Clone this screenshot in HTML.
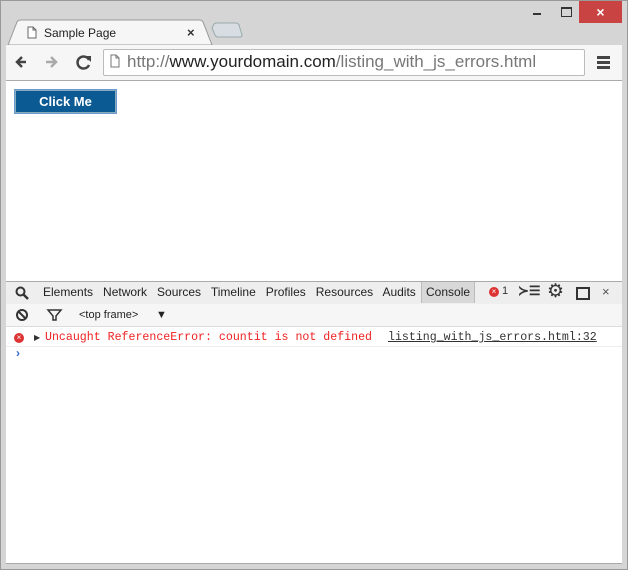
<!DOCTYPE html>
<html><head><style>
body{margin:0;width:628px;height:570px;background:#fff;font-family:"Liberation Sans",sans-serif;position:relative;overflow:hidden}
.a{position:absolute}
.mono{font-family:"Liberation Mono",monospace}
</style></head><body>
<div class="a" style="left:0;top:0;width:626px;height:568px;background:#d5d5d5;border:1px solid #999"></div>
<!-- window controls -->
<div class="a" style="left:533px;top:13px;width:8px;height:2px;background:#333"></div>
<div class="a" style="left:561px;top:7px;width:9px;height:7px;border:1.5px solid #333;border-top-width:2.5px"></div>
<div class="a" style="left:579px;top:1px;width:43px;height:22px;background:#c94343;color:#fff;font-size:14px;text-align:center;line-height:22px;font-weight:bold">×</div>
<!-- tab -->
<svg class="a" style="left:0;top:18px" width="250" height="28"><path d="M212 10 L214 6 Q215 5 217 5 L236 5 Q238 5 239 7 L242 17 Q242 19 240 19 L218 19 Q216 19 215 17 Z" fill="#d8dde3" stroke="#9aa"/><path d="M8 27 L17 4 Q18 2 21 2 L199 2 Q202 2 203 4 L212 27 Z" fill="#f6f6f6" stroke="#999"/></svg>
<svg class="a" style="left:27px;top:26px" width="10" height="13"><path d="M1 1H6L9 4V12H1Z M6 1V4H9" fill="#fff" stroke="#666"/></svg>
<div class="a" style="left:44px;top:26px;font-size:12px;color:#222">Sample Page</div>
<div class="a" style="left:187px;top:25px;font-size:13px;color:#333;font-weight:bold">×</div>
<!-- toolbar -->
<div class="a" style="left:6px;top:45px;width:616px;height:35px;background:#f6f6f6;border-bottom:1px solid #aaa"></div>
<svg class="a" style="left:14px;top:53px" width="80" height="18"><path d="M12 9H3M8 4L3 9L8 14" stroke="#444" stroke-width="2.5" fill="none"/><path d="M32 9H41M37 4L42 9L37 14" stroke="#aaa" stroke-width="2.5" fill="none"/><path d="M75 7A6 6 0 1 0 75 12" stroke="#444" stroke-width="2.5" fill="none"/><path d="M71 3H77V9Z" fill="#444"/></svg>
<div class="a" style="left:103px;top:49px;width:480px;height:25px;background:#fff;border:1px solid #bbb;border-radius:2px"></div>
<svg class="a" style="left:110px;top:54px" width="10" height="14"><path d="M1 1H6L9 4V13H1Z M6 1V4H9" fill="#fff" stroke="#777"/></svg>
<div class="a" style="left:127px;top:52px;font-size:17px;color:#777">http://<span style="color:#222">www.yourdomain.com</span>/listing_with_js_errors.html</div>
<div class="a" style="left:597px;top:56px;width:13px;height:2.5px;background:#444;box-shadow:0 5px 0 #444,0 10px 0 #444"></div>
<!-- content -->
<div class="a" style="left:6px;top:81px;width:616px;height:200px;background:#fff"></div>
<div class="a" style="left:15px;top:90px;width:99px;height:21px;background:#0c5a94;border:1px solid #8ab;outline:1px solid #6a9ad0;color:#fff;font-weight:bold;font-size:13px;text-align:center;line-height:21px">Click Me</div>
<!-- devtools -->
<div class="a" style="left:6px;top:281px;width:616px;height:282px;background:#fff"></div>
<div class="a" style="left:6px;top:281px;width:616px;height:22px;background:#eee;border-top:1px solid #aaa;border-bottom:1px solid #ccc"></div>
<svg class="a" style="left:15px;top:286px" width="14" height="14"><circle cx="5.5" cy="5.5" r="4" stroke="#333" stroke-width="2" fill="none"/><path d="M8.5 8.5L13 13" stroke="#333" stroke-width="2.5"/></svg>
<div class="a" style="left:43px;top:285px;font-size:12px;color:#222">Elements&nbsp;&nbsp; Network&nbsp;&nbsp; Sources&nbsp;&nbsp; Timeline&nbsp;&nbsp; Profiles&nbsp;&nbsp; Resources&nbsp;&nbsp; Audits</div>
<div class="a" style="left:421px;top:282px;width:52px;height:21px;background:#d8d8d8;border-left:1px solid #bbb;border-right:1px solid #bbb"></div>
<div class="a" style="left:426px;top:285px;font-size:12px;color:#222">Console</div>
<div class="a" style="left:489px;top:287px;width:10px;height:10px;border-radius:50%;background:#d33;color:#fff;font-size:8px;text-align:center;line-height:10px">×</div>
<div class="a" style="left:502px;top:285px;font-size:11px;color:#333">1</div>
<div class="a" style="left:518px;top:283px;font-size:13px;color:#333;font-weight:bold">≻☰</div>
<div class="a" style="left:547px;top:280px;font-size:19px;color:#333">⚙</div>
<div class="a" style="left:576px;top:287px;width:10px;height:9px;border:2px solid #333"></div>
<div class="a" style="left:602px;top:284px;font-size:13px;color:#555">×</div>
<div class="a" style="left:6px;top:304px;width:616px;height:22px;background:#f6f6f6;border-bottom:1px solid #ddd"></div>
<svg class="a" style="left:16px;top:308px" width="60" height="14"><circle cx="6" cy="7" r="5" stroke="#333" stroke-width="2" fill="none"/><path d="M3 4L9 10" stroke="#333" stroke-width="2"/><path d="M32 2H45L40 8V12H37V8Z" stroke="#333" stroke-width="1.5" fill="none"/></svg>
<div class="a" style="left:79px;top:309px;font-size:11px;color:#222">&lt;top frame&gt;</div>
<div class="a" style="left:156px;top:309px;font-size:11px;color:#222">▼</div>
<div class="a" style="left:14px;top:333px;width:10px;height:10px;border-radius:50%;background:#d33;color:#fff;font-size:8px;text-align:center;line-height:10px">×</div>
<div class="a" style="left:34px;top:333px;font-size:8px;color:#333">▶</div>
<div class="a mono" style="left:45px;top:331px;font-size:11.6px;color:#e22">Uncaught ReferenceError: countit is not defined</div>
<div class="a mono" style="left:388px;top:331px;font-size:11.6px;color:#333;text-decoration:underline">listing_with_js_errors.html:32</div>
<div class="a" style="left:6px;top:346px;width:616px;height:1px;background:#eee"></div>
<div class="a" style="left:16px;top:346px;font-size:12px;color:#36c;font-weight:bold">›</div>
<div class="a" style="left:6px;top:563px;width:616px;height:1px;background:#aaa"></div>
</body></html>
